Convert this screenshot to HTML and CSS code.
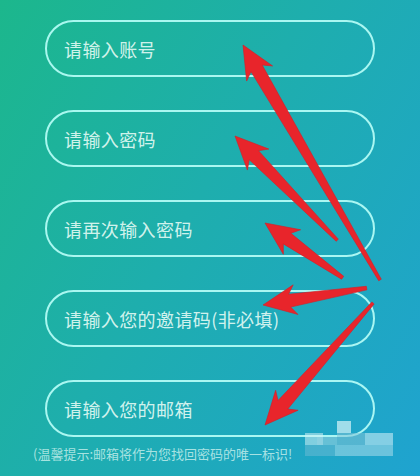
FILE: index.html
```html
<!DOCTYPE html>
<html lang="zh-CN">
<head>
<meta charset="utf-8">
<title>注册</title>
<link rel="stylesheet" href="styles.css">
</head>
<body>
<div class="page">
  <form class="form">
    <div class="field">请输入账号</div>
    <div class="field">请输入密码</div>
    <div class="field">请再次输入密码</div>
    <div class="field">请输入您的邀请码(非必填)</div>
    <div class="field">请输入您的邮箱</div>
  </form>
  <p class="tip">(温馨提示:邮箱将作为您找回密码的唯一标识!</p>

  <div class="watermark">
    <span class="wm wm1"></span>
    <span class="wm wm2"></span>
    <span class="wm wm3"></span>
    <span class="wm wm4"></span>
    <span class="wm wm5"></span>
    <span class="wm wm6"></span>
    <span class="wm wm7"></span>
  </div>

  <svg class="arrows" width="420" height="476" viewBox="0 0 420 476" xmlns="http://www.w3.org/2000/svg">
    <g fill="#e8252b" stroke="#d41f28" stroke-width="0.6" stroke-linejoin="round">
      <polygon transform="translate(243 45) rotate(59.76)" points="0,0 33,-15 27,-6.5 272,-1.5 272,1.5 27,6.5 33,15"/>
      <polygon transform="translate(235 136) rotate(45.55)" points="0,0 33,-15 27,-6.5 146,-1.5 146,1.5 27,6.5 33,15"/>
      <polygon transform="translate(265 223) rotate(35.2)" points="0,0 33,-15 27,-6.5 95,-1.8 95,1.8 27,6.5 33,15"/>
      <polygon transform="translate(263 305) rotate(-9.28)" points="0,0 33,-15 27,-6.5 105,-1.8 105,1.8 27,6.5 33,15"/>
      <polygon transform="translate(265 425) rotate(-48.5)" points="0,0 33,-15 27,-6.5 163,-1.5 163,1.5 27,6.5 33,15"/>
    </g>
  </svg>
</div>
</body>
</html>
```

FILE: styles.css
```css
* {
  box-sizing: border-box;
}

html, body {
  margin: 0;
  padding: 0;
}

body {
  width: 420px;
  height: 476px;
  overflow: hidden;
  font-family: "Noto Sans CJK SC", "Noto Sans", sans-serif;
}

.page {
  position: relative;
  width: 420px;
  height: 476px;
  background: linear-gradient(120deg, #1cb78c 0%, #1eaead 45%, #1fa3d0 100%);
}

.form {
  display: flex;
  flex-direction: column;
  gap: 33px;
  margin: 0;
  padding: 20px 0 0 45px;
}

.field {
  display: flex;
  align-items: center;
  width: 330px;
  height: 57px;
  padding-left: 17px;
  border: 2px solid rgba(185, 255, 248, 0.9);
  border-radius: 29px;
  color: rgba(232, 252, 246, 0.9);
  font-size: 18px;
  letter-spacing: 0.4px;
}

.tip {
  margin: 8px 0 0 33px;
  font-size: 13px;
  line-height: 18px;
  color: rgba(205, 242, 238, 0.8);
  white-space: nowrap;
}

.watermark {
  position: absolute;
  left: 305px;
  top: 419px;
  width: 90px;
  height: 38px;
}

.wm {
  position: absolute;
  display: block;
}

.wm1 { left: 0; top: 14px; width: 18px; height: 12px; background: rgba(210, 240, 245, 0.55); }
.wm2 { left: 12px; top: 18px; width: 20px; height: 8px; background: rgba(150, 210, 225, 0.6); }
.wm3 { left: 32px; top: 2px; width: 14px; height: 12px; background: rgba(215, 245, 250, 0.7); }
.wm4 { left: 32px; top: 14px; width: 28px; height: 12px; background: rgba(130, 195, 215, 0.55); }
.wm5 { left: 60px; top: 14px; width: 28px; height: 12px; background: rgba(200, 235, 245, 0.6); }
.wm6 { left: 0; top: 26px; width: 30px; height: 11px; background: rgba(120, 190, 215, 0.45); }
.wm7 { left: 30px; top: 26px; width: 58px; height: 11px; background: rgba(170, 220, 235, 0.55); }

.arrows {
  position: absolute;
  left: 0;
  top: 0;
  pointer-events: none;
}
```
